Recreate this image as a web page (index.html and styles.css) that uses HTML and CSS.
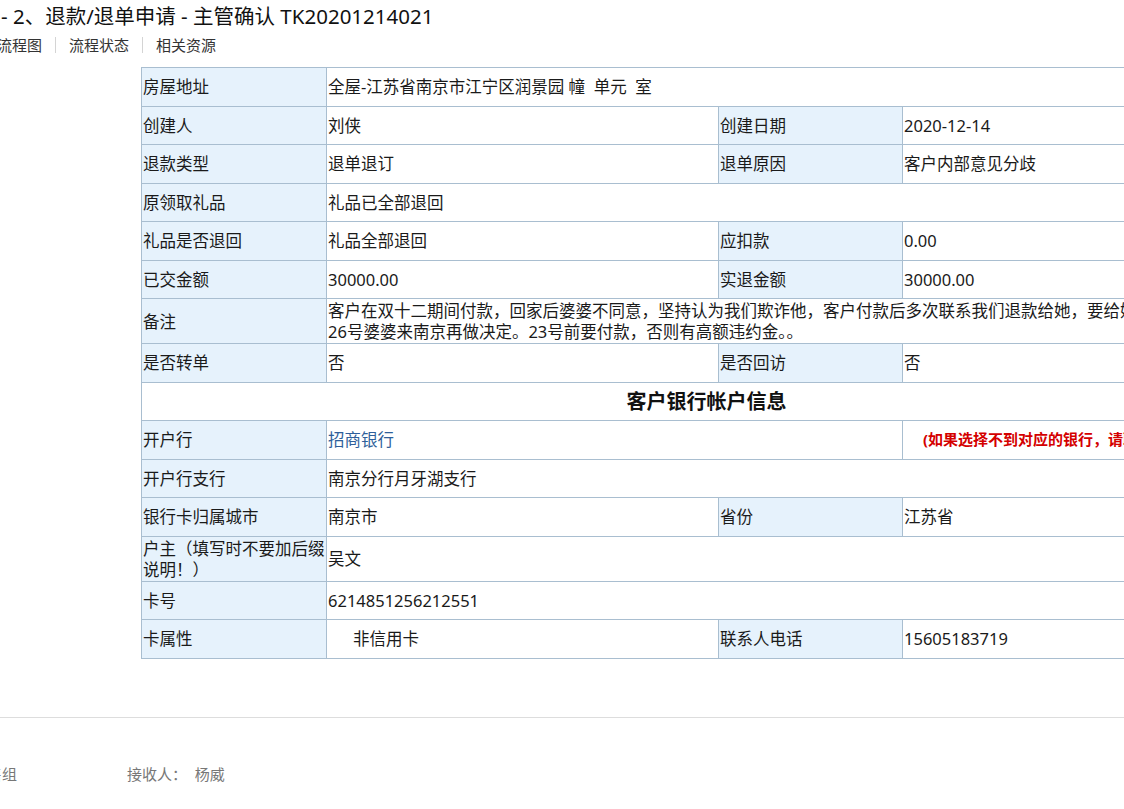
FILE: index.html
```html
<!DOCTYPE html>
<html lang="zh-CN">

<head>
  <meta charset="UTF-8">
  <title>退款/退单申请 - 主管确认</title>
  <link rel="stylesheet" href="styles.css">
</head>

<body>
  <div class="page-title">- 2、退款/退单申请 - 主管确认 TK20201214021</div>
  <div class="page-nav">
    <span>流程图</span><i class="sep"></i><span>流程状态</span><i class="sep"></i><span>相关资源</span>
  </div>

  <table class="form-table">
    <colgroup>
      <col class="c-label">
      <col class="c-value">
      <col class="c-label2">
      <col class="c-value2">
    </colgroup>
    <tr>
      <td class="lbl">房屋地址</td>
      <td colspan="3">全屋-江苏省南京市江宁区润景园 幢&nbsp; 单元&nbsp; 室</td>
    </tr>
    <tr>
      <td class="lbl">创建人</td>
      <td>刘侠</td>
      <td class="lbl">创建日期</td>
      <td>2020-12-14</td>
    </tr>
    <tr>
      <td class="lbl">退款类型</td>
      <td>退单退订</td>
      <td class="lbl">退单原因</td>
      <td>客户内部意见分歧</td>
    </tr>
    <tr>
      <td class="lbl">原领取礼品</td>
      <td colspan="3">礼品已全部退回</td>
    </tr>
    <tr>
      <td class="lbl">礼品是否退回</td>
      <td>礼品全部退回</td>
      <td class="lbl">应扣款</td>
      <td>0.00</td>
    </tr>
    <tr>
      <td class="lbl">已交金额</td>
      <td>30000.00</td>
      <td class="lbl">实退金额</td>
      <td>30000.00</td>
    </tr>
    <tr>
      <td class="lbl">备注</td>
      <td colspan="3">客户在双十二期间付款，回家后婆婆不同意，坚持认为我们欺诈他，客户付款后多次联系我们退款给她，要给她考虑，等到<br>26号婆婆来南京再做决定。23号前要付款，否则有高额违约金。。</td>
    </tr>
    <tr>
      <td class="lbl">是否转单</td>
      <td>否</td>
      <td class="lbl">是否回访</td>
      <td>否</td>
    </tr>
    <tr>
      <td class="section" colspan="4">客户银行帐户信息</td>
    </tr>
    <tr>
      <td class="lbl">开户行</td>
      <td colspan="2" class="bank">招商银行</td>
      <td class="note">(如果选择不到对应的银行，请联系管理员添加)</td>
    </tr>
    <tr>
      <td class="lbl">开户行支行</td>
      <td colspan="3">南京分行月牙湖支行</td>
    </tr>
    <tr>
      <td class="lbl">银行卡归属城市</td>
      <td>南京市</td>
      <td class="lbl">省份</td>
      <td>江苏省</td>
    </tr>
    <tr>
      <td class="lbl">户主（填写时不要加后缀说明！）</td>
      <td colspan="3">吴文</td>
    </tr>
    <tr>
      <td class="lbl">卡号</td>
      <td colspan="3">6214851256212551</td>
    </tr>
    <tr>
      <td class="lbl">卡属性</td>
      <td class="indent">非信用卡</td>
      <td class="lbl">联系人电话</td>
      <td>15605183719</td>
    </tr>
  </table>

  <div class="footer-line"></div>
  <div class="footer">
    <span class="group">销售组</span>
    <span>接收人：&nbsp; 杨威</span>
  </div>
</body>

</html>
```

FILE: styles.css
```css
html, body {
  overflow: hidden;
}

body {
  margin: 0;
  width: 1124px;
  font-family: "Noto Sans", "Noto Sans CJK SC", sans-serif;
  color: #1a1a1a;
  background: #fff;
}

.page-title {
  font-size: 20.5px;
  line-height: 28px;
  padding-top: 2px;
  padding-left: 1px;
  color: #111;
  white-space: nowrap;
}

.page-nav {
  margin-top: 4px;
  margin-left: -3px;
  font-size: 15px;
  line-height: 22px;
  color: #333;
  white-space: nowrap;
  display: flex;
  align-items: center;
}

.page-nav .sep {
  display: inline-block;
  width: 1px;
  height: 16px;
  background: #d4d4d4;
  margin: 0 13px;
}

.form-table {
  margin-top: 11px;
  margin-left: 141px;
  border-collapse: collapse;
  table-layout: fixed;
  width: 1129px;
  font-size: 16.5px;
}

.c-label { width: 185px; }
.c-value { width: 392px; }
.c-label2 { width: 184px; }
.c-value2 { width: 368px; }

.form-table td {
  border: 1px solid #a9bed0;
  height: 35.5px;
  padding: 1px 0 1px 1px;
  line-height: 21px;
  vertical-align: middle;
  overflow: hidden;
  white-space: nowrap;
}

.form-table td.lbl {
  background: #e6f2fc;
  white-space: normal;
}

.form-table td.section {
  text-align: center;
  font-size: 20px;
  font-weight: bold;
  color: #111;
}

.form-table td.bank {
  color: #2f5f9a;
}

.form-table td.note {
  padding-left: 20px;
  color: #d40000;
  font-size: 15px;
  font-weight: bold;
}

.form-table td.indent {
  padding-left: 26px;
}

.footer-line {
  margin-top: 58px;
  height: 1px;
  background: #ddd;
}

.footer {
  margin-top: 45px;
  display: flex;
  font-size: 15px;
  line-height: 22px;
  color: #777;
  white-space: nowrap;
}

.footer .group {
  margin-left: -28px;
  width: 155px;
}
```
